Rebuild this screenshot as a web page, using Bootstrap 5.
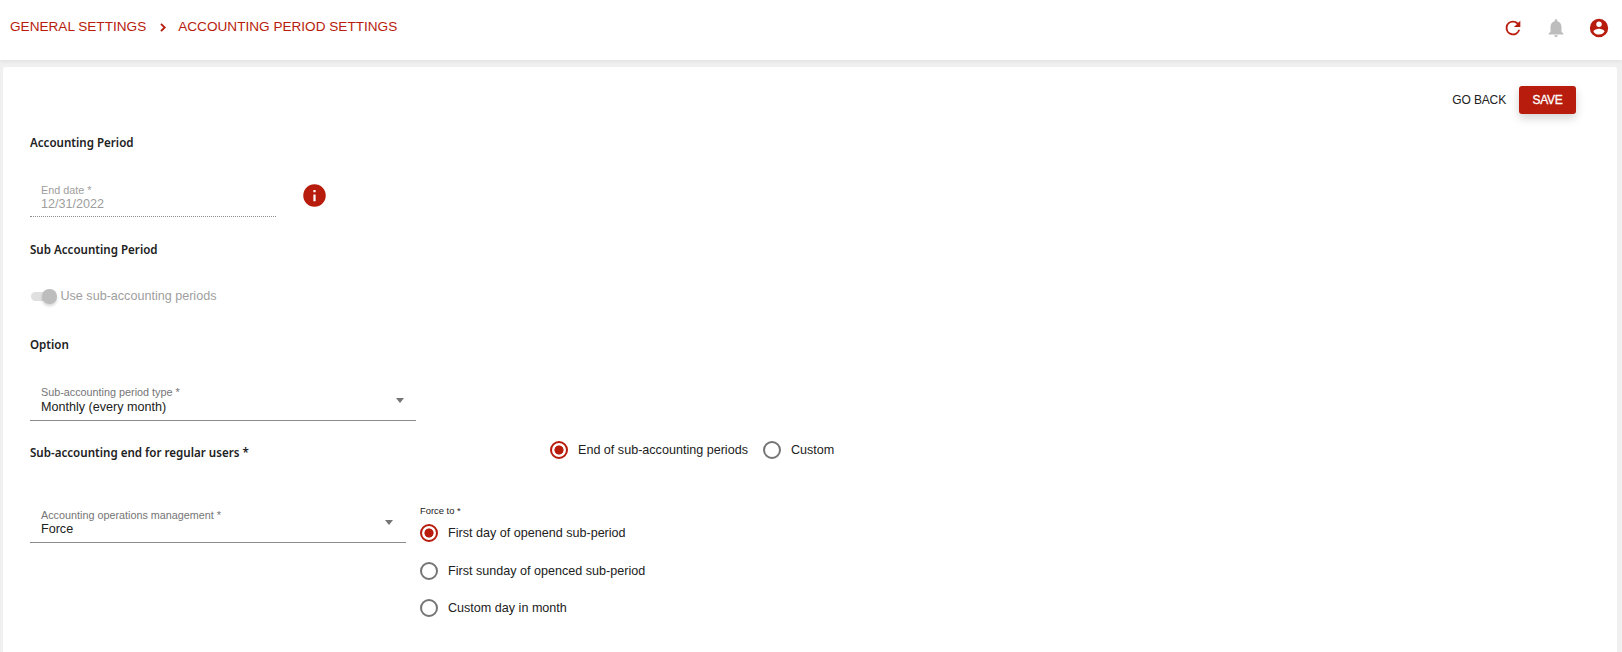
<!DOCTYPE html>
<html lang="en">
<head>
<meta charset="utf-8">
<title>Accounting period settings</title>
<link rel="stylesheet" href="https://cdn.jsdelivr.net/npm/bootstrap@5.3.0/dist/css/bootstrap.min.css">
<script src="https://cdn.jsdelivr.net/npm/bootstrap@5.3.0/dist/js/bootstrap.bundle.min.js"></script>
<style>
  :root { --brand: #b71c0c; }
  body { background: #f0f0f0; color: #212121; font: 12.58px/20px "Liberation Sans", Arial, sans-serif; overflow: hidden; }
  .topbar { height: 60px; padding: 0 12px 0 10px; box-shadow: 0 1px 5px rgba(0,0,0,.08); }
  .crumbs { color: var(--brand); font-size: 13.6px; letter-spacing: 0; margin-top: -7px; }
  .crumbs a { color: inherit; }
  .crumbs svg { margin: 1px 12px 0 14px; }
  .top-icons { margin: -5px 0 0; gap: 21px; }
  .panel { margin: 7px 5px 0 3px; padding: 19px 41px 0 27px; height: 585px; border-radius: 3px 3px 0 0; background: #fff; }
  .tools { height: 28px; gap: 13px; }
  .tools .btn { font-size: 12px; line-height: 20px; border: 0; }
  .btn-back { padding: 0; color: #212121; letter-spacing: -.15px; }
  .btn-save, .btn-save:hover { width: 57px; height: 28px; padding: 4px 0; background: var(--brand); color: #fff; border-radius: 3px; box-shadow: 0 4px 10px rgba(0,0,0,.18); letter-spacing: -.25px; -webkit-text-stroke: .3px #fff; }
  .title { font: 600 11.58px/20px "Noto Sans", "Open Sans", sans-serif; margin: 0; }
  .field { border-bottom: 1px solid #8c8c8c; padding-left: 11px; }
  .field label { display: block; font-size: 10.8px; line-height: 14px; height: 14px; color: #757575; }
  .field .value { line-height: 16px; }
  .field .value.tight { line-height: 14px; }
  .field.off { width: 246px; border-bottom: 1px dotted #8c8c8c; height: 34px; }
  .field.off label, .field.off .value { color: #9e9e9e; }
  .caret { width: 0; height: 0; border: 4.5px solid transparent; border-top: 5px solid #757575; border-bottom: 0; }
  .toggle { width: 25px; height: 15px; }
  .toggle::before { content: ""; display: block; width: 23px; height: 9px; margin-top: 3px; border-radius: 5px; background: #e0e0e0; }
  .toggle::after { content: ""; display: block; width: 14.5px; height: 14.5px; margin: -12px 0 0 11.3px; border-radius: 50%; background: #bdbdbd; box-shadow: 0 2px 3px rgba(0,0,0,.16); }
  .option { height: 20px; gap: 10px; }
  .option input { appearance: none; width: 18px; height: 18px; margin: 0; border: 2px solid #757575; border-radius: 50%; flex: none; }
  .option input:checked { border-color: var(--brand); background: radial-gradient(circle, var(--brand) 4.2px, transparent 4.9px); }
  .option span { margin-top: -1px; }
</style>
</head>
<body>
<header class="topbar bg-white d-flex align-items-center justify-content-between position-relative">
  <nav class="crumbs d-flex align-items-center">
    <a class="text-decoration-none" href="#">GENERAL SETTINGS</a>
    <svg width="6" height="9" viewBox="0 0 6 9" fill="none" stroke="currentColor" stroke-width="1.9"><path d="M1 .8 4.7 4.5 1 8.2"/></svg>
    <a class="text-decoration-none" href="#">ACCOUNTING PERIOD SETTINGS</a>
  </nav>
  <div class="top-icons d-flex align-items-center">
    <svg width="22" height="22" viewBox="0 0 24 24" fill="#b71c0c"><path d="M17.65 6.35A7.96 7.96 0 0 0 12 4a8 8 0 1 0 7.73 10h-2.08A6 6 0 1 1 12 6c1.66 0 3.14.69 4.22 1.78L13 11h7V4z"/></svg>
    <svg width="22" height="22" viewBox="0 0 24 24" fill="#bdbdbd"><path d="M12 22c1.1 0 2-.9 2-2h-4a2 2 0 0 0 2 2zm6-6v-5c0-3.07-1.64-5.64-4.5-6.32V4a1.5 1.5 0 0 0-3 0v.68C7.63 5.36 6 7.92 6 11v5l-2 2v1h16v-1z"/></svg>
    <svg width="22" height="22" viewBox="0 0 24 24" fill="#b71c0c"><path d="M12 2a10 10 0 1 0 0 20 10 10 0 0 0 0-20zm0 3a3 3 0 1 1 0 6 3 3 0 0 1 0-6zm0 14.2a7.2 7.2 0 0 1-6-3.22c.03-1.99 4-3.08 6-3.08 1.99 0 5.97 1.09 6 3.08a7.2 7.2 0 0 1-6 3.22z"/></svg>
  </div>
</header>

<main class="panel">
  <div class="tools d-flex align-items-center justify-content-end">
    <button class="btn btn-back">GO BACK</button>
    <button class="btn btn-save">SAVE</button>
  </div>

  <h2 class="title" style="margin-top:19px">Accounting Period</h2>
  <div class="d-flex" style="margin-top:30px">
    <div class="field off"><label>End date *</label><div class="value tight">12/31/2022</div></div>
    <svg style="margin:-1px 0 0 25px" width="27" height="27" viewBox="0 0 24 24" fill="#b71c0c"><path d="M12 2a10 10 0 1 0 0 20 10 10 0 0 0 0-20zm1 15h-2v-6h2zm0-8h-2V7h2z"/></svg>
  </div>

  <h2 class="title" style="margin-top:23px">Sub Accounting Period</h2>
  <div class="d-flex" style="margin-top:27px;padding-left:1px;height:20px">
    <div class="toggle" style="margin-top:2px"></div>
    <span style="color:#9e9e9e;margin:-1px 0 0 4.5px">Use sub-accounting periods</span>
  </div>

  <h2 class="title" style="margin-top:28px">Option</h2>
  <div class="field d-flex justify-content-between" style="margin-top:30px;width:386px;height:36px;padding-right:12px">
    <div><label>Sub-accounting period type *</label><div class="value">Monthly (every month)</div></div>
    <div class="caret" style="margin-top:13px"></div>
  </div>

  <div class="d-flex" style="margin-top:19px">
    <h2 class="title" style="width:520px;padding-top:3px">Sub-accounting end for regular users *</h2>
    <label class="option d-flex align-items-center"><input type="radio" name="end" checked><span>End of sub-accounting periods</span></label>
    <label class="option d-flex align-items-center" style="margin-left:15px"><input type="radio" name="end"><span>Custom</span></label>
  </div>

  <div class="d-flex" style="margin-top:40px">
    <div class="field d-flex justify-content-between" style="margin-top:5px;width:376px;height:35px;padding-right:13px">
      <div><label>Accounting operations management *</label><div class="value tight">Force</div></div>
      <div class="caret" style="margin-top:12px"></div>
    </div>
    <div style="margin-left:14px">
      <div style="font-size:9.4px;line-height:15px;height:20px">Force to *</div>
      <label class="option d-flex align-items-center"><input type="radio" name="force" checked><span>First day of openend sub-period</span></label>
      <label class="option d-flex align-items-center" style="margin-top:18px"><input type="radio" name="force"><span>First sunday of openced sub-period</span></label>
      <label class="option d-flex align-items-center" style="margin-top:17px"><input type="radio" name="force"><span>Custom day in month</span></label>
    </div>
  </div>
</main>
</body>
</html>
